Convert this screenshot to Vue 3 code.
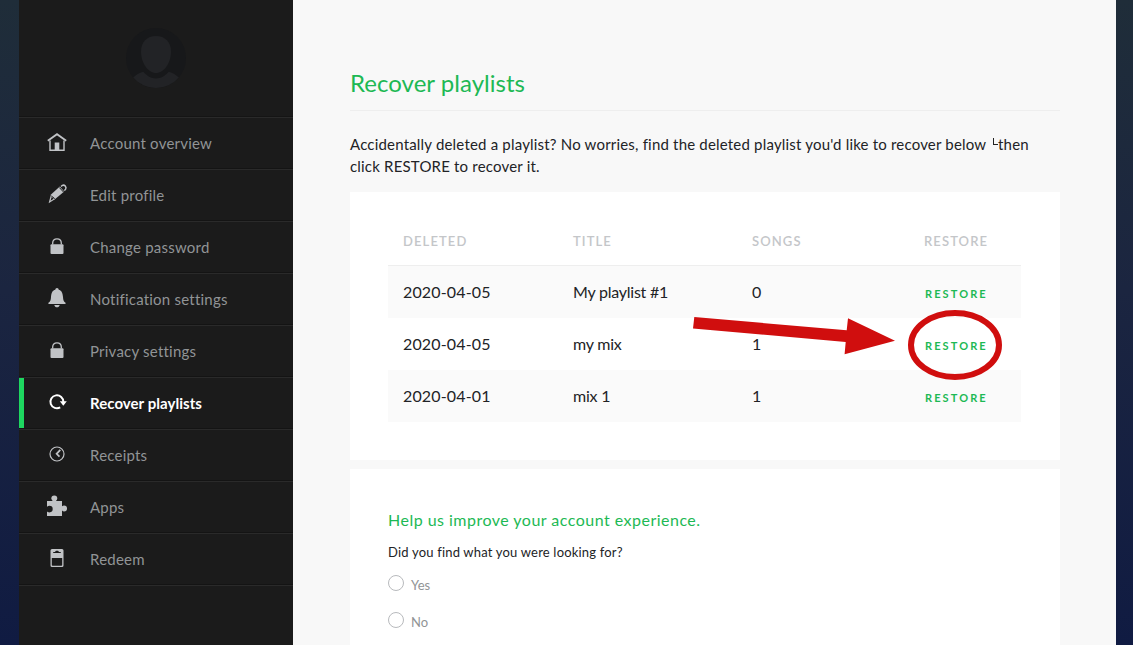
<script setup>
const items = [
  { icon: 'home', label: 'Account overview' },
  { icon: 'pencil', label: 'Edit profile' },
  { icon: 'lock', label: 'Change password' },
  { icon: 'bell', label: 'Notification settings' },
  { icon: 'lock', label: 'Privacy settings' },
  { icon: 'refresh', label: 'Recover playlists', active: true },
  { icon: 'clock', label: 'Receipts' },
  { icon: 'puzzle', label: 'Apps' },
  { icon: 'card', label: 'Redeem' },
]
const rows = [
  { date: '2020-04-05', title: 'My playlist #1', songs: 0 },
  { date: '2020-04-05', title: 'my mix', songs: 1 },
  { date: '2020-04-01', title: 'mix 1', songs: 1 },
]
const answers = ['Yes', 'No']
</script>

<template>
  <div class="page">
    <aside class="sidebar">
      <div class="profile">
        <svg class="avatar" width="60" height="60" viewBox="0 0 60 60">
          <circle cx="30" cy="30" r="30" fill="#17181a" />
          <path d="M30 8c9 0 15 6 15 15.500C45 35 38 45 30 45S15 35 15 23.500C15 14 21 8 30 8z" fill="#222326" />
          <path d="M7.200 49.500C10 47 13 45 17.300 43.800C21 48 25 50.500 30 50.500S39 48 42.700 43.800C47 45 50 47 52.800 49.500A30 30 0 0 1 7.200 49.500z" fill="#222326" />
        </svg>
      </div>
      <nav class="nav">
        <a v-for="item in items" :key="item.label" class="item" :class="{ active: item.active }">
          <svg class="icon" width="24" height="24" viewBox="0 0 24 24">
            <g v-if="item.icon === 'home'" fill="none" stroke="currentColor" stroke-width="1.400">
              <path d="M2.800 10.800L12 4.200l9.200 6.600" stroke-width="1.800" />
              <path d="M5 10.500v9.700h14v-9.700" />
              <path d="M9.700 20.500v-8h4.600v8z" fill="currentColor" stroke="none" />
            </g>
            <g v-else-if="item.icon === 'pencil'" transform="translate(0 .3)">
              <path d="M6 12.200L14.800 4.300l4.400 4.800-9.300 7.900-6.300 4z" fill="currentColor" />
              <path d="M16 4.200l1.400-1.100c2-1 4.500 1.500 3.200 3.700l-1.200 1.500" fill="none" stroke="currentColor" stroke-width="1.500" />
              <path d="M14.300 5.200l4.200 4.500M6.300 13.700l3.400 2.600" stroke="#1b1b1b" stroke-width="1" />
              <path d="M6.700 14.700l2 1.800-3.200 2z" fill="#1b1b1b" />
            </g>
            <g v-else-if="item.icon === 'lock'">
              <rect x="5.500" y="10.300" width="13" height="9.800" rx="1" fill="currentColor" />
              <path d="M7.700 10.500V9c0-2.500 1.500-4.200 4.300-4.200S16.300 6.500 16.300 9v1.500" fill="none" stroke="currentColor" stroke-width="1.300" />
            </g>
            <g v-else-if="item.icon === 'bell'" fill="currentColor">
              <path d="M12 3.500c4.300 0 5.700 3 6 7.500.2 3 .5 4.700 2.500 5.800.5.400.2 1.200-.5 1.200H4c-.7 0-1-.8-.5-1.200C5.500 15.700 5.800 14 6 11c.3-4.500 1.700-7.500 6-7.500z" />
              <path d="M9.300 19h5.400c-.4 1.600-1.300 2.300-2.700 2.300s-2.300-.7-2.700-2.300z" />
              <circle cx="12" cy="3.800" r="1.700" />
            </g>
            <g v-else-if="item.icon === 'refresh'">
              <path d="M15.200 17.400A6.500 6.500 0 1 1 18.400 12" fill="none" stroke="currentColor" stroke-width="2" />
              <path d="M14.800 11.300h7l-3.500 4.500z" fill="currentColor" />
            </g>
            <g v-else-if="item.icon === 'clock'" fill="none" stroke="currentColor" stroke-width="1.200">
              <circle cx="12" cy="12" r="7" />
              <path d="M15.300 7.800l-3.700 4 2.900 2.800" stroke-width="1.700" />
            </g>
            <g v-else-if="item.icon === 'puzzle'" fill="currentColor">
              <path d="M2 7h5.700C6.900 5.900 6.300 5.200 6.300 4.600a3 3 0 0 1 6 0c0 .8-.6 1.600-1.300 2.400h6v5.300c.8-.6 1.300-.9 2-.9a3 3 0 0 1 0 6.100c-.7 0-1.200-.3-2-.9V22H2v-4.500c1 .7 1.700.9 2.400.9a3.300 3.300 0 0 0 0-6.600c-.9 0-1.500.3-2.400 1z" />
            </g>
            <g v-else>
              <path d="M7 3h10q1.500 0 1.500 1.500v15q0 1.500-1.500 1.500H7q-1.500 0-1.500-1.500v-15Q5.500 3 7 3zM6.800 12v7q0 .8.800.8h8.800q.8 0 .8-.8v-7zM8.200 6v1h7.600V6h-2c0-.8-.4-1.300-1.800-1.300S10.200 5.200 10.200 6z" fill="currentColor" fill-rule="evenodd" />
            </g>
          </svg>
          <span class="label">{{ item.label }}</span>
        </a>
      </nav>
    </aside>

    <main class="content">
      <h1>Recover playlists</h1>
      <p class="intro">
        Accidentally deleted a playlist? No worries, find the deleted playlist you'd like to recover below <i class="corner"></i>then<br />click RESTORE to recover it.
      </p>
      <section class="panel playlists">
        <div class="row head">
          <span>DELETED</span><span>TITLE</span><span>SONGS</span><span>RESTORE</span>
        </div>
        <div v-for="(row, i) in rows" :key="i" class="row">
          <span class="date">{{ row.date }}</span>
          <span class="title">{{ row.title }}</span>
          <span>{{ row.songs }}</span>
          <a class="restore">RESTORE</a>
        </div>
      </section>
      <section class="panel survey">
        <h2>Help us improve your account experience.</h2>
        <p class="question">Did you find what you were looking for?</p>
        <label v-for="answer in answers" :key="answer" class="answer">
          <i class="radio"></i><span>{{ answer }}</span>
        </label>
      </section>
    </main>

    <svg class="marks" width="1133" height="645" viewBox="0 0 1133 645">
      <path d="M694.300 317L846.700 330.300 848 318.300 895 340.700 844.600 354.200 845.700 342 693 328.500z" fill="#d00e0e" />
      <ellipse cx="955" cy="345" rx="44" ry="32" fill="none" stroke="#d00e0e" stroke-width="6" />
    </svg>
  </div>
</template>

<style>
body { margin: 0; overflow: hidden; }
</style>

<style scoped>
.page {
  position: relative;
  box-sizing: border-box;
  display: flex;
  width: 1133px;
  height: 645px;
  padding: 0 17px 0 19px;
  overflow: hidden;
  background: linear-gradient(#1f2d39, #1b2540 45%, #101b42);
  font-family: Lato, "Liberation Sans", sans-serif;
  color: #222326;
}
.sidebar { width: 274px; background: #1b1b1b; }
.profile { display: flex; justify-content: center; height: 117px; padding-top: 28px; box-sizing: border-box; border-bottom: 1px solid #151515; }
.item {
  display: flex;
  align-items: center;
  box-sizing: border-box;
  height: 52px;
  padding-left: 26px;
  border-top: 1px solid #2a2a2a;
  border-bottom: 1px solid #141414;
  color: #c1c3c6;
}
.nav { border-bottom: 1px solid #2a2a2a; }
.icon { margin-top: -3px; }
.label { margin-left: 21px; font-size: 15px; line-height: 20px; letter-spacing: 0.22px; color: #919496; }
.active { padding-left: 21px; box-shadow: inset 5px 0 #1ed760; padding-left: 26px; color: #fff; }
.active .label { color: #fff; font-weight: 700; letter-spacing: 0.05px; }

.content { flex: 1; padding: 69px 56px 0 57px; background: #f8f8f8; }
h1 { margin: 0; height: 41px; border-bottom: 1px solid #eee; font-size: 24px; line-height: 28px; font-weight: 400; letter-spacing: 0.03px; color: #1db954; }
.intro { margin: 22px 0 15px; font-size: 15px; line-height: 22px; letter-spacing: 0.19px; white-space: nowrap; }
.corner { display: inline-block; width: 4px; height: 6px; margin-left: 3px; border-left: 1px solid #222; border-bottom: 1px solid #222; vertical-align: 5px; }
.panel { box-sizing: border-box; width: 710px; background: #fff; }
.playlists { height: 268px; padding: 26px 39px 0 38px; }
.row { display: grid; grid-template-columns: 170px 179px 172px 97px; box-sizing: border-box; height: 52px; padding: 0 0 2px 15px; align-items: center; font-size: 16px; letter-spacing: 0.15px; }
.row:nth-child(even) { background: #fafafa; }
.title { letter-spacing: -0.23px; }
.head { height: 48px; border-bottom: 1px solid #eee; font-size: 13px; font-weight: 600; letter-spacing: 1.1px; color: #c4c6c9; }
.restore { padding: 5px 0 0 1px; font-size: 11px; font-weight: 700; letter-spacing: 2.1px; color: #1db954; }
.survey { height: 240px; margin-top: 9px; padding: 40px 38px 0; }
h2 { margin: 0; font-size: 16px; line-height: 22px; font-weight: 400; letter-spacing: 0.48px; color: #1db954; }
.question { margin: 11px 0 13px; font-size: 13px; line-height: 20px; letter-spacing: 0.19px; }
.answer { display: flex; height: 37px; font-size: 13px; line-height: 16px; color: #919496; }
.answer span { margin: 2px 0 0 7px; }
.radio { box-sizing: border-box; width: 16px; height: 16px; border: 1px solid #b8babd; border-radius: 50%; }
.marks { position: absolute; top: 0; left: 0; pointer-events: none; }
</style>
